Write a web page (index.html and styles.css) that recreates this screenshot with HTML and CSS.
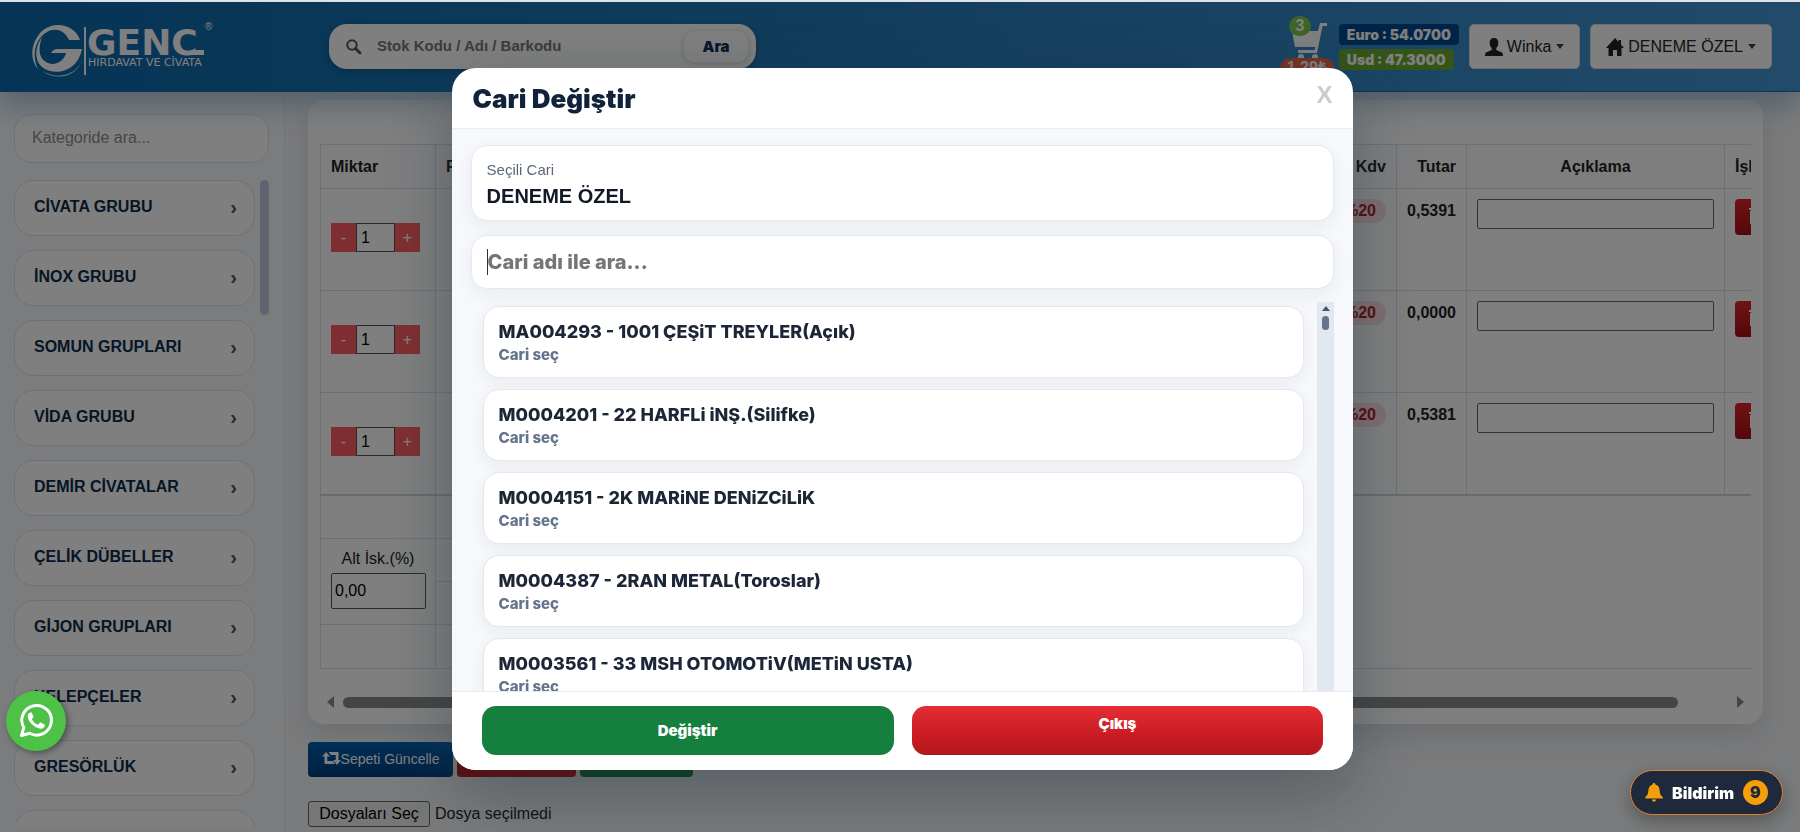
FILE: index.html
```html
<!DOCTYPE html>
<html lang="tr">
<head>
<meta charset="utf-8">
<title>Genç Hırdavat - Sepet</title>
<link rel="stylesheet" href="styles.css">
</head>
<body>
<header class="topbar">
  <a href="#" class="logo" aria-label="Genç Hırdavat ve Civata">
    <svg width="200" height="58" viewBox="0 0 200 58" aria-hidden="true">
      <g fill="#fff">
        <path d="M49 19 C44 4 24 -1 11 10 C0 21 -2 37 7 48 C1 36 3 21 13 13 C21 6 33 7 38 19 Z"/>
        <path d="M51 28 H27 C23 28 21 30 20 32 H35 C33 40 25 45 17 42 C9 39 6 30 11 16 C3 27 3 42 14 48 C27 55 47 49 51 28 Z"/>
        <path d="M11 50 C29 60 46 53 52 38 C46 55 27 61 11 50 Z"/>
        <rect x="53" y="6" width="2" height="48"/>
        <text x="56" y="34" class="logo-name">GENC</text>
        <path d="M160 34 L165 29 H173 V34 Z"/>
        <text x="57" y="45" class="logo-sub">HIRDAVAT VE CİVATA</text>
        <text x="174" y="9" class="logo-reg">®</text>
      </g>
    </svg>
  </a>
  <form class="search">
    <svg width="16" height="16" viewBox="0 0 16 16" aria-hidden="true"><circle cx="6" cy="6" r="4.7" fill="none" stroke="#555" stroke-width="2"/><path d="M9.5 9.5 14 14" stroke="#555" stroke-width="2.8" stroke-linecap="round"/></svg>
    <input type="text" placeholder="Stok Kodu / Adı / Barkodu" aria-label="Stok ara">
    <button type="button">Ara</button>
  </form>
  <div class="tools">
    <a href="#" class="cart" aria-label="Sepet">
      <svg width="40" height="40" viewBox="0 0 40 40" aria-hidden="true"><path d="M3 11 H29 L31 3 H38 V6 H33.500 L28 33 H9 V30 H25.500 L26.300 27 H6 Z" fill="#fff"/><circle cx="12" cy="37" r="3" fill="#fff"/><circle cx="26" cy="37" r="3" fill="#fff"/></svg>
      <span class="cart-count">3</span>
      <span class="cart-total">1.29₺</span>
    </a>
    <div class="rates">
      <span class="rate euro">Euro : 54.0700</span>
      <span class="rate usd">Usd : 47.3000</span>
    </div>
    <button type="button" class="menu-btn">
      <svg width="18" height="18" viewBox="0 0 18 18" aria-hidden="true"><path d="M9 0C6 0 4.500 2 4.700 5c.2 3 1 4 2 5v2L1 14.500Q0 15 0 18H18q0-3-1-3.500L11.300 12v-2c1-1 1.800-2 2-5C13.500 2 12 0 9 0Z" fill="#222"/></svg>
      <span>Winka</span><i class="caret"></i>
    </button>
    <button type="button" class="menu-btn">
      <svg width="18" height="18" viewBox="0 0 18 18" aria-hidden="true"><path d="M9 0 0 10h2.500v8H7v-6h4v6h4.500v-8H18l-3-3.300V2h-2.500v2Z" fill="#222"/></svg>
      <span>DENEME ÖZEL</span><i class="caret"></i>
    </button>
  </div>
</header>

<div class="layout">
  <aside class="sidebar">
    <input type="text" class="cat-search" placeholder="Kategoride ara..." aria-label="Kategoride ara">
    <div class="cat-wrap">
      <nav class="cats">
        <a href="#"><span>CİVATA GRUBU</span><b>›</b></a>
        <a href="#"><span>İNOX GRUBU</span><b>›</b></a>
        <a href="#"><span>SOMUN GRUPLARI</span><b>›</b></a>
        <a href="#"><span>VİDA GRUBU</span><b>›</b></a>
        <a href="#"><span>DEMİR CİVATALAR</span><b>›</b></a>
        <a href="#"><span>ÇELİK DÜBELLER</span><b>›</b></a>
        <a href="#"><span>GİJON GRUPLARI</span><b>›</b></a>
        <a href="#"><span>KELEPÇELER</span><b>›</b></a>
        <a href="#"><span>GRESÖRLÜK</span><b>›</b></a>
        <a href="#"><span></span></a>
      </nav>
      <div class="cat-bar"></div>
    </div>
  </aside>

  <main class="content">
    <section class="card">
      <div class="table-scroll">
        <table class="basket">
          <colgroup><col class="c-qty"><col><col class="c-kdv"><col class="c-sum"><col class="c-note"><col class="c-act"></colgroup>
          <thead><tr><th>Miktar</th><th>Fiyat</th><th class="right">Kdv</th><th class="right">Tutar</th><th class="center">Açıklama</th><th>İşlem</th></tr></thead>
          <tbody>
            <tr><td><div class="qty"><button type="button">-</button><input value="1" aria-label="Miktar"><button type="button">+</button></div></td><td></td><td class="right"><span class="kdv">%20</span></td><td class="right sum">0,5391</td><td><input class="note" aria-label="Açıklama"></td><td><button type="button" class="del" aria-label="Sil"><svg width="16" height="18" viewBox="0 0 16 18"><path d="M0 3H16M2 5V17H14V5M5 3V1h6v2" fill="none" stroke="#fff" stroke-width="2"/></svg></button></td></tr>
            <tr><td><div class="qty"><button type="button">-</button><input value="1" aria-label="Miktar"><button type="button">+</button></div></td><td></td><td class="right"><span class="kdv">%20</span></td><td class="right sum">0,0000</td><td><input class="note" aria-label="Açıklama"></td><td><button type="button" class="del" aria-label="Sil"><svg width="16" height="18" viewBox="0 0 16 18"><path d="M0 3H16M2 5V17H14V5M5 3V1h6v2" fill="none" stroke="#fff" stroke-width="2"/></svg></button></td></tr>
            <tr><td><div class="qty"><button type="button">-</button><input value="1" aria-label="Miktar"><button type="button">+</button></div></td><td></td><td class="right"><span class="kdv">%20</span></td><td class="right sum">0,5381</td><td><input class="note" aria-label="Açıklama"></td><td><button type="button" class="del" aria-label="Sil"><svg width="16" height="18" viewBox="0 0 16 18"><path d="M0 3H16M2 5V17H14V5M5 3V1h6v2" fill="none" stroke="#fff" stroke-width="2"/></svg></button></td></tr>
          </tbody>
          <tfoot>
            <tr class="short"><td></td><td></td><td colspan="4" class="open"></td></tr>
            <tr class="half"><td rowspan="2" class="disc"><label for="disc">Alt İsk.(%)</label><input id="disc" value="0,00"></td><td></td><td colspan="4" class="open"></td></tr>
            <tr class="half"><td></td><td colspan="4" class="open"></td></tr>
            <tr class="short"><td></td><td></td><td colspan="4" class="open last"></td></tr>
          </tfoot>
        </table>
      </div>
      <div class="hbar"><i class="arr left"></i><div class="hthumb"></div><i class="arr rgt"></i></div>
    </section>
    <div class="actions">
      <button type="button" class="act blue"><svg width="19" height="13" viewBox="0 0 19 13" aria-hidden="true"><path d="M4 0 8 4.500H5.300V9H11L13 12H2.500V4.500H0ZM6.500 0H16.500V8H19L15 13 11 8H13.700V3H9Z" fill="#fff"/></svg>Sepeti Güncelle</button>
      <button type="button" class="act red">Sepeti Boşalt</button>
      <button type="button" class="act green">Sipariş Ver</button>
    </div>
    <div class="files"><button type="button">Dosyaları Seç</button><span>Dosya seçilmedi</span></div>
    <div class="hint">Max 8 MB</div>
  </main>
</div>

<div class="overlay">
  <section class="modal" role="dialog" aria-labelledby="mt">
    <header class="m-head"><h2 id="mt">Cari Değiştir</h2><button type="button" class="close" aria-label="Kapat">X</button></header>
    <div class="m-body">
      <div class="picked"><small>Seçili Cari</small><strong>DENEME ÖZEL</strong></div>
      <div class="find"><i class="cursor"></i><input type="text" placeholder="Cari adı ile ara..." aria-label="Cari adı ile ara"></div>
      <div class="list-wrap">
        <div class="list">
          <button type="button"><strong>MA004293 - 1001 ÇEŞiT TREYLER(Açık)</strong><small>Cari seç</small></button>
          <button type="button"><strong>M0004201 - 22 HARFLi iNŞ.(Silifke)</strong><small>Cari seç</small></button>
          <button type="button"><strong>M0004151 - 2K MARiNE DENiZCiLiK</strong><small>Cari seç</small></button>
          <button type="button"><strong>M0004387 - 2RAN METAL(Toroslar)</strong><small>Cari seç</small></button>
          <button type="button"><strong>M0003561 - 33 MSH OTOMOTiV(METiN USTA)</strong><small>Cari seç</small></button>
        </div>
        <div class="vbar"><i class="up"></i><div class="vthumb"></div></div>
      </div>
    </div>
    <footer class="m-foot"><button type="button" class="ok">Değiştir</button><button type="button" class="exit">Çıkış</button></footer>
  </section>
</div>

<a href="#" class="whatsapp" aria-label="WhatsApp">
  <svg width="36" height="36" viewBox="0 0 36 36" aria-hidden="true"><path d="M3.500 32.500 5.800 24.600A14.800 14.800 0 1 1 11.500 30.200Z" fill="none" stroke="#fff" stroke-width="3" stroke-linejoin="round"/><path d="M12.500 9.500c-1.500 0-3 2-2.800 4.300.5 5.500 8 12 13 11.900 2.500 0 4.300-2 4.200-4l-4.700-2.500-2.200 2.500c-3-1-5-3-6.200-5.600l1.700-2.200-1.800-4.300Z" fill="#fff"/></svg>
</a>
<button type="button" class="notice">
  <svg width="18" height="19" viewBox="0 0 18 19" aria-hidden="true"><path d="M9 0c1 0 1.400.6 1.400 1.500C13.500 2.300 14.500 5 14.700 8c.2 3 .8 4.500 3 6v1.500H.3V14c2.200-1.500 2.800-3 3-6C3.500 5 4.500 2.300 7.600 1.500 7.600.6 8 0 9 0ZM7 16.500h4c0 3-4 3-4 0Z" fill="#f59e0b"/></svg>
  <span>Bildirim</span><b>9</b>
</button>
</body>
</html>
```
FILE: styles.css
```css
* { box-sizing: border-box; }
html { height: 100%; }
body {
  margin: 0; height: 100vh; overflow: hidden; display: flex; flex-direction: column;
  border-top: 2px solid #dde3e8; background: #f8fafc; color: #222;
  font-family: "Liberation Sans", Arial, sans-serif; font-size: 16px;
}
button, input { font-family: inherit; font-size: 16px; margin: 0; }
a { color: inherit; text-decoration: none; }

.topbar {
  flex: none; display: flex; align-items: flex-start; height: 90px; padding: 22px 28px 0 31px;
  background: linear-gradient(90deg, #0a68ac 0%, #227ab8 45%, #4596d4 100%);
  border-bottom: 1px solid #1a6ca8; box-shadow: 0 12px 28px rgba(20, 90, 150, .35); position: relative;
}
.logo { width: 298px; height: 58px; flex: none; }
.logo svg { display: block; margin-top: -3px; overflow: visible; }
.logo-name { font: bold 36px "DejaVu Sans", sans-serif; }
.logo-sub { font: 11px "DejaVu Sans", sans-serif; }
.logo-reg { font: 10px "Liberation Sans", sans-serif; }
.search {
  display: flex; align-items: center; width: 427px; height: 45px; padding: 0 7px 0 17px;
  border-radius: 18px; background: #fff; box-shadow: 0 2px 6px rgba(0, 0, 0, .25);
}
.search input { flex: 1; min-width: 0; border: 0; background: none; padding: 0 0 2px 15px; font-size: 15px; font-weight: bold; }
.search input::placeholder { color: #777; opacity: 1; }
.search button {
  width: 66px; height: 33px; border: 1px solid #eee; border-radius: 12px; background: #fff;
  box-shadow: 0 1px 5px rgba(0, 0, 0, .15); color: #0b2f55; font: 900 15px Inter, sans-serif;
}
.tools { margin-left: auto; display: flex; gap: 10px; }
.cart { position: relative; width: 40px; }
.cart svg { display: block; margin-top: -4px; }
.cart-count {
  position: absolute; left: 0; top: -8px; width: 22px; height: 20px; border-radius: 10px;
  background: #7ec850; color: #fff; font-size: 16px; font-weight: bold; line-height: 20px; text-align: center;
}
.cart-total {
  position: absolute; left: -9px; top: 34px; width: 54px; height: 20px; border-radius: 10px;
  background: #f0654a; color: #fff; font-size: 16px; font-weight: bold; line-height: 20px; text-align: center;
}
.rates { display: flex; flex-direction: column; align-items: flex-start; gap: 4px; }
.rate { height: 21px; padding: 0 8px; border-radius: 4px; color: #fff; font: 900 14px/21px Inter, sans-serif; }
.euro { background: #00498f; }
.usd { background: #6aa82e; }
.menu-btn {
  display: flex; align-items: center; gap: 4px; height: 45px; padding: 0 15px; border: 1px solid #ddd;
  border-radius: 5px; background: #fff; color: #222;
}
.caret { border: 4px solid transparent; border-top: 5px solid #444; border-bottom: 0; margin-left: 1px; }

.layout { flex: 1; min-height: 0; display: flex; }
.sidebar { width: 285px; flex: none; padding: 22px 15px 6px 14px; border-right: 1px solid #e3e9ef; background: #f5f9fc; display: flex; flex-direction: column; overflow: hidden; }
.cat-search { height: 49px; flex: none; width: 100%; padding: 0 17px 2px; border: 1px solid #dbe4ec; border-radius: 18px; background: #fff; }
.cat-search::placeholder { color: #8a8f94; opacity: 1; }
.cat-wrap { display: flex; gap: 5px; margin-top: 17px; flex: 1; min-height: 0; overflow: hidden; }
.cats { flex: 1; display: flex; flex-direction: column; gap: 14px; }
.cats a {
  flex: none; display: flex; align-items: center; justify-content: space-between; height: 56px; padding: 0 17px 2px 19px;
  border: 1px solid #dbe4ec; border-radius: 20px; background: #fff; color: #0b2c4a; font-weight: bold;
}
.cats b { font-size: 20px; line-height: 20px; color: #46586b; }
.cat-bar { width: 9px; height: 135px; border-radius: 5px; background: #c3c9dc; }

.content { flex: 1; min-width: 0; padding: 8px 37px 0 23px; overflow: hidden; background: #f5f6f8; }
.card { padding: 44px 12px 16px 12px; border-radius: 16px; background: #fff; box-shadow: 0 10px 30px rgba(30, 60, 90, .15); }
.table-scroll { overflow: hidden; }
.basket { width: 1470px; min-width: 100%; border-collapse: collapse; table-layout: fixed; }
.c-qty { width: 115px; } .c-kdv { width: 120px; } .c-sum { width: 70px; } .c-note { width: 258px; } .c-act { width: 65px; }
.basket th { height: 44px; padding: 0 10px; text-align: left; border: 1px solid #dbe0e6; background: #fcfdfe; }
.basket td { height: 102px; padding: 10px; vertical-align: top; border: 1px solid #dbe0e6; }
.basket .right { text-align: right; }
.basket .center { text-align: center; }
.basket .sum { font-weight: bold; padding-top: 13px; }
.basket tfoot { border-top: 2px solid #cfd6dc; }
.basket tfoot .short td { height: 44px; }
.basket tfoot .half td { height: 43px; }
.basket tfoot td.open { border-top: 0; border-bottom: 0; border-right: 0; }
.basket tfoot td.last { border-bottom: 1px solid #dbe0e6; }
.qty { display: flex; margin-top: 24px; width: 89px; }
.qty button { width: 25px; height: 29px; border: 0; padding: 0; background: #ff5f62; color: #fff; }
.qty input { width: 39px; height: 29px; border: 1px solid #555; padding: 0 4px; background: #fff; }
.kdv { display: inline-block; padding: 0 10px; border-radius: 12px; background: #ffdfe1; color: #b3141c; font-weight: bold; line-height: 24px; }
.note { width: 100%; height: 30px; border: 1px solid #666; border-radius: 2px; background: #fff; }
.del { width: 44px; height: 36px; border: 0; border-radius: 4px; padding: 0 12px; background: linear-gradient(#e0252c, #a80f16); }
.disc label { display: block; text-align: center; line-height: 20px; }
.basket .disc input { width: 95px; height: 36px; margin-top: 4px; border: 1px solid #555; border-radius: 2px; padding: 0 3px; }
.hbar { display: flex; align-items: center; justify-content: space-between; margin-top: 27px; padding: 0 7px; }
.hthumb { flex: 1; height: 11px; border-radius: 6px; background: #8a8a8a; margin: 0 59px 0 9px; }
.arr { border: 6px solid transparent; }
.arr.left { border-right: 7px solid #8a8a8a; border-left: 0; }
.arr.rgt { border-left: 7px solid #8a8a8a; border-right: 0; }
.actions { display: flex; gap: 4px; margin-top: 18px; }
.act { display: flex; align-items: center; justify-content: center; height: 35px; padding: 0 12px 2px; border: 0; border-radius: 4px; color: #fff; font-size: 14px; }
.act.blue { width: 145px; background: linear-gradient(#0060b0, #003f80); }
.act.red { width: 119px; background: #c4161e; }
.act.green { width: 113px; background: #15803d; }
.files { display: flex; align-items: center; gap: 5px; margin-top: 24px; }
.files button { width: 122px; height: 26px; padding: 0; border: 1px solid #666; border-radius: 3px; background: #efefef; color: #000; }
.hint { line-height: 20px; font-weight: bold; margin-top: 2px; }

.overlay { position: fixed; top: 2px; right: 0; bottom: 0; left: 0; display: flex; justify-content: center; align-items: flex-start; padding-top: 66px; background: rgba(0, 0, 0, .5); }
.modal {
  display: flex; flex-direction: column; width: 50.1%; margin-left: 5px; height: 702px; border-radius: 24px; overflow: hidden;
  background: #fff; box-shadow: 0 24px 70px rgba(30, 50, 62, .4);
}
.m-head { flex: none; display: flex; justify-content: space-between; align-items: flex-start; height: 61px; padding: 13px 21px 0 21px; border-bottom: 1px solid #e8ecf1; }
.m-head h2 { margin: 0; font: 900 26px/36px Inter, sans-serif; color: #10233a; }
.close { border: 0; background: none; padding: 0; font-size: 24px; line-height: 28px; font-weight: bold; color: #ccc; }
.m-body { flex: 1; min-height: 0; display: flex; flex-direction: column; padding: 16px 19px 0; background: #f6f8fb; }
.picked, .find { border: 1px solid #e5e9ee; border-radius: 16px; background: #fff; box-shadow: 0 6px 18px rgba(30, 50, 70, .06); }
.picked { display: flex; flex-direction: column; height: 76px; padding: 12px 15px; flex: none; }
.picked small { font-size: 15px; line-height: 24px; color: #5b6778; }
.picked strong { font-size: 20px; line-height: 29px; color: #111827; }
.find { display: flex; align-items: center; flex: none; height: 54px; margin-top: 14px; padding: 0 15px; }
.cursor { width: 1px; height: 26px; background: #333; }
.find input { flex: 1; border: 0; padding: 0; outline: 0; background: none; font: 800 20px Inter, sans-serif; }
.find input::placeholder { color: #757575; opacity: 1; }
.list-wrap { flex: 1; min-height: 0; display: flex; justify-content: space-between; margin-top: 13px; overflow: hidden; }
.list { flex: 1; display: flex; flex-direction: column; gap: 11px; padding: 4px 13px 0 12px; }
.list button {
  flex: none; display: flex; flex-direction: column; justify-content: center; height: 72px; padding: 0 15px; text-align: left;
  border: 1px solid #e3e8ee; border-radius: 16px; background: #fff; box-shadow: 0 5px 15px rgba(30, 50, 70, .06);
}
.list strong { font: 800 18px/26px Inter, sans-serif; color: #1c2637; }
.list small { font: 800 15px/20px Inter, sans-serif; color: #64748b; }
.vbar { width: 17px; background: #e2e8f0; display: flex; flex-direction: column; align-items: center; padding-top: 4px; }
.up { border: 4px solid transparent; border-bottom: 5px solid #475569; border-top: 0; }
.vthumb { width: 7px; height: 14px; margin-top: 5px; border-radius: 4px; background: #64748b; }
.m-foot { flex: none; display: flex; gap: 18px; height: 79px; padding: 14px 30px 15px; border-top: 1px solid #e8ecf1; background: #fff; }
.m-foot button { flex: 1; height: 49px; border: 0; border-radius: 14px; color: #fff; font: 900 15px Inter, sans-serif; }
.m-foot .ok { background: #15803d; }
.m-foot .exit { background: linear-gradient(#e52d34, #c91c22 60%, #b4171c); padding-bottom: 15px; border-bottom: 1px solid #991b1b; }

.whatsapp { position: fixed; left: 6px; bottom: 81px; width: 60px; height: 60px; border-radius: 50%; background: #4dc247; box-shadow: 2px 2px 6px rgba(0, 0, 0, .4); display: flex; align-items: center; justify-content: center; }
.notice {
  position: fixed; right: 17px; bottom: 17px; height: 45px; display: flex; align-items: center; gap: 9px; padding: 0 14px;
  border: 1px solid #e08030; border-radius: 23px; background: #1e293b; color: #fff; font: 900 16px Inter, sans-serif; box-shadow: 0 6px 18px rgba(0, 0, 0, .3);
}
.notice b { width: 25px; height: 25px; border-radius: 50%; background: #f59e0b; color: #1e293b; line-height: 25px; text-align: center; }
```
